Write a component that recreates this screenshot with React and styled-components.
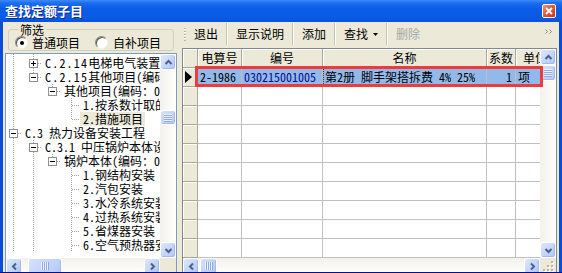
import React from 'react';
import styled, { createGlobalStyle } from 'styled-components';

const FONT = `"Noto Sans Mono CJK SC", "Noto Sans CJK SC", "Liberation Sans", sans-serif`;

const GlobalStyle = createGlobalStyle`
  * { box-sizing: border-box; }
  html, body { margin: 0; padding: 0; background: #ffffff; }
  body { font-family: ${FONT}; font-size: 12px; color: #000; }
`;

// window frame
const Window = styled.div`
  width: 562px;
  height: 273px;
  display: flex;
  flex-direction: column;
  background: #0B4CD9;
  border-bottom: 1px solid #00138C;
  overflow: hidden;
`;

const TitleBar = styled.div`
  height: 22px;
  flex: none;
  display: flex;
  align-items: center;
  justify-content: space-between;
  padding: 0 6px 0 5px;
  background: linear-gradient(to bottom, #3C8CF6 0%, #1C6DF0 14%, #0A5CE6 40%, #0A5AE4 80%, #0852DC 100%);
`;

const Title = styled.span`
  color: #fff;
  font-weight: bold;
  font-size: 13px;
  line-height: 22px;
  text-shadow: 1px 1px 0 #0A2A8A;
`;

const CloseButton = styled.div`
  width: 14px;
  height: 14px;
  border: 1px solid #fff;
  border-radius: 2px;
  background: linear-gradient(135deg, #F09477 0%, #E2552F 50%, #C8361A 100%);
  display: flex;
  align-items: center;
  justify-content: center;
`;

const Body = styled.div`
  flex: 1;
  margin: 0 3px 5px 3px;
  padding-bottom: 1px;
  background: #ECE9D8;
  display: flex;
`;

// left side: filter + tree
const LeftPanel = styled.div`
  width: 174px;
  flex: none;
  display: flex;
  flex-direction: column;
  padding-left: 2px;
`;

const GroupBox = styled.div`
  margin: 7px 3px 0 3px;
  padding-bottom: 1px;
  border: 1px solid #D0D0BF;
  border-radius: 3px;
`;

const Legend = styled.span`
  display: block;
  width: fit-content;
  margin: -7px 0 0 9px;
  padding: 0 2px;
  line-height: 13px;
  background: #ECE9D8;
`;

const RadioRow = styled.div`
  display: flex;
  align-items: center;
  height: 13px;
  padding-left: 6px;
`;

const RadioCircle = styled.span`
  width: 13px;
  height: 13px;
  flex: none;
  border-radius: 50%;
  border: 1px solid;
  border-color: #8A877A #F4F3EE #F4F3EE #8A877A;
  box-shadow: inset 1px 1px 0 #555;
  background: #fff;
  display: flex;
  align-items: center;
  justify-content: center;
  margin-right: ${p => p.$gap}px;
`;

const RadioDot = styled.span`
  width: 4px;
  height: 4px;
  border-radius: 50%;
  background: #000;
`;

const RadioLabel = styled.span`
  line-height: 13px;
  margin-right: ${p => p.$after || 0}px;
`;

const Tree = styled.div`
  flex: 1;
  margin-top: 2px;
  border: 1px solid #7F9DB9;
  background: #fff;
  display: grid;
  grid-template-columns: 1fr 16px;
  grid-template-rows: 1fr 16px;
  min-height: 0;
`;

const TreeViewport = styled.div`
  overflow: hidden;
  min-width: 0;
`;

const TreeRow = styled.div`
  display: flex;
  height: ${p => p.$h}px;
  overflow: hidden;
`;

const TreeLabel = styled.span`
  height: 14px;
  line-height: 14px;
  padding: 0 2px 0 3px;
  white-space: nowrap;
  background: ${p => (p.$selected ? '#ECE9D8' : 'transparent')};
`;

const Code = styled.span`
  letter-spacing: ${p => p.$spacing || 0}px;
`;

const Corner = styled.div`
  background: #ECE9D8;
`;

// right side: toolbar + grid
const RightPanel = styled.div`
  flex: 1;
  min-width: 0;
  display: flex;
  flex-direction: column;
  margin-left: 5px;
  padding-right: 2px;
`;

const Toolbar = styled.div`
  height: 22px;
  margin: 1px 0 3px 0;
  display: flex;
  align-items: center;
  padding-left: 2px;
`;

const Gripper = styled.div`
  width: 2px;
  height: 13px;
  margin-right: 2px;
  background: repeating-linear-gradient(to bottom, #B9B6A6 0 1px, #FFFFFF 1px 2px, transparent 2px 3px);
`;

const ToolButton = styled.div`
  display: flex;
  align-items: center;
  padding: 0 6px;
  line-height: 22px;
  color: ${p => (p.$disabled ? '#A7A6AA' : '#000')};
`;

const Separator = styled.div`
  width: 2px;
  height: 22px;
  margin: 0 2px;
  border-left: 1px solid #C5C2B2;
  border-right: 1px solid #FFFFFF;
`;

const Chevron = styled.div`
  margin-left: auto;
  margin-right: 4px;
  align-self: flex-start;
  margin-top: 6px;
  display: flex;
`;

const Grid = styled.div`
  flex: 1;
  position: relative;
  border: 1px solid #828790;
  background: #fff;
  display: grid;
  grid-template-columns: 1fr 16px;
  grid-template-rows: 1fr 16px;
  min-height: 0;
`;

const GridCells = styled.div`
  overflow: hidden;
  min-width: 0;
  background: #fff;
`;

const COLS = '15px 44px 81px 164px 29px 39px';

const GridRow = styled.div`
  display: grid;
  grid-template-columns: ${COLS};
  height: 19px;
`;

const HeadCell = styled.div`
  background: #ECE9D8;
  border-right: 1px solid #ACA899;
  border-bottom: 1px solid #ACA899;
  box-shadow: inset 1px 1px 0 #FFFFFF;
  line-height: 18px;
  text-align: center;
  white-space: nowrap;
  overflow: hidden;
`;

const IndCell = styled(HeadCell)`
  display: flex;
  align-items: center;
  padding-left: 2px;
`;

const Cell = styled.div`
  position: relative;
  background: ${p => (p.$selected ? '#93B8EA' : '#FFFFFF')};
  color: ${p => p.$color || '#000'};
  text-align: ${p => p.$align || 'left'};
  border-right: 1px solid #C0C0C0;
  border-bottom: 1px solid #C0C0C0;
  padding: 0 3px 0 2px;
  line-height: 18px;
  white-space: nowrap;
  overflow: hidden;
`;

const FocusMark = styled.span`
  position: absolute;
  left: 0;
  top: 0;
  bottom: 0;
  border-left: 1px dotted #3A3A20;
`;

const Highlight = styled.div`
  position: absolute;
  left: 12px;
  top: 17px;
  width: 348px;
  height: 21px;
  border: 3px solid #EE3B3B;
  pointer-events: none;
`;

// scroll bars
const ScrollTrack = styled.div`
  display: flex;
  flex-direction: ${p => (p.$vertical ? 'column' : 'row')};
  background: ${p =>
    p.$vertical
      ? 'linear-gradient(to right, #F3F1EC, #FEFEFB)'
      : 'linear-gradient(to bottom, #F3F1EC, #FEFEFB)'};
  overflow: hidden;
  min-width: 0;
  min-height: 0;
`;

const ScrollButton = styled.div`
  width: 16px;
  height: 16px;
  flex: none;
  display: flex;
  align-items: center;
  justify-content: center;
  border: 1px solid #FFFFFF;
  border-radius: 3px;
  background: linear-gradient(135deg, #DDE7FE 0%, #C4D5FB 55%, #B0C6F6 100%);
  box-shadow: inset -1px -1px 0 #A3B9EA;
`;

const Thumb = styled.div`
  flex: none;
  width: ${p => (p.$vertical ? 16 : p.$size)}px;
  height: ${p => (p.$vertical ? p.$size : 16)}px;
  margin-top: ${p => (p.$vertical ? p.$offset : 0)}px;
  margin-left: ${p => (p.$vertical ? 0 : p.$offset)}px;
  display: flex;
  align-items: center;
  justify-content: center;
  border: 1px solid #FFFFFF;
  border-radius: 3px;
  background: linear-gradient(135deg, #D5E1FD 0%, #C3D4FB 55%, #B4C9F7 100%);
  box-shadow: inset -1px -1px 0 #A3B9EA;
`;

const Filler = styled.div`
  flex: 1;
`;

const SizeGrip = styled.div`
  background: #ECE9D8;
  display: flex;
  align-items: flex-end;
  justify-content: flex-end;
  padding: 0 2px 2px 0;
`;

const ARROWS = {
  up: '1.5,6 4.5,3 7.5,6',
  down: '1.5,3 4.5,6 7.5,3',
  left: '6,1.5 3,4.5 6,7.5',
  right: '3,1.5 6,4.5 3,7.5',
};

const Arrow = ({ dir }) => (
  <svg width="9" height="9" viewBox="0 0 9 9">
    <polyline points={ARROWS[dir]} fill="none" stroke="#4D6185" strokeWidth="2" />
  </svg>
);

const Grip = ({ vertical }) => (
  <svg width="8" height="8" viewBox="0 0 8 8">
    {[0, 2, 4, 6].map(i =>
      vertical ? (
        <g key={i}>
          <rect x="0" y={i} width="8" height="1" fill="#EEF4FE" />
          <rect x="0" y={i + 1} width="8" height="1" fill="#8DA8E3" />
        </g>
      ) : (
        <g key={i}>
          <rect x={i} y="0" width="1" height="8" fill="#EEF4FE" />
          <rect x={i + 1} y="0" width="1" height="8" fill="#8DA8E3" />
        </g>
      )
    )}
  </svg>
);

function ScrollBar({ vertical, offset, size }) {
  return (
    <ScrollTrack $vertical={vertical}>
      <ScrollButton>
        <Arrow dir={vertical ? 'up' : 'left'} />
      </ScrollButton>
      <Thumb $vertical={vertical} $offset={offset} $size={size}>
        <Grip vertical={vertical} />
      </Thumb>
      <Filler />
      <ScrollButton>
        <Arrow dir={vertical ? 'down' : 'right'} />
      </ScrollButton>
    </ScrollTrack>
  );
}

// tree connectors
const CENTERS = [7, 27, 46, 65];
const LINE = { stroke: '#A0A0A0', strokeDasharray: '1 1', strokeWidth: 1 };

function TreeLines({ node, h }) {
  const own = node.level;
  const width = own == null ? 80 : CENTERS[own] + 9;
  const c = own == null ? 0 : CENTERS[own];
  return (
    <svg width={width} height={h} style={{ flex: 'none' }}>
      {node.guides.map(g => (
        <line key={g} x1={CENTERS[g] + 0.5} y1="0" x2={CENTERS[g] + 0.5} y2={h} {...LINE} />
      ))}
      {own != null && (
        <>
          <line x1={c + 0.5} y1="0" x2={c + 0.5} y2={node.last ? 7.5 : h} {...LINE} />
          <line x1={node.box ? c + 5 : c + 1} y1="7.5" x2={c + 9} y2="7.5" {...LINE} />
          {node.box && (
            <>
              <rect x={c - 3.5} y="3.5" width="8" height="8" fill="#fff" stroke="#8E8F8F" />
              <line x1={c - 2} y1="7.5" x2={c + 3} y2="7.5" stroke="#000" />
              {node.box === '+' && <line x1={c + 0.5} y1="5" x2={c + 0.5} y2="10" stroke="#000" />}
            </>
          )}
        </>
      )}
    </svg>
  );
}

const treeNodes = [
  { h: 2, guides: [0, 1], level: null },
  { guides: [0], level: 1, box: '+', code: 'C.2.14', spacing: 1.2, text: '电梯电气装置(编码：030214)' },
  { guides: [0], level: 1, box: '-', last: true, code: 'C.2.15', spacing: 1.2, text: '其他项目(编码：030215)' },
  { guides: [0], level: 2, box: '-', last: true, text: '其他项目(编码：030215001)' },
  { guides: [0], level: 3, text: '1.按系数计取的项目' },
  { guides: [0], level: 3, last: true, selected: true, text: '2.措施项目' },
  { guides: [], level: 0, box: '-', text: 'C.3 热力设备安装工程' },
  { guides: [0], level: 1, box: '-', text: 'C.3.1  中压锅炉本体设备安装' },
  { guides: [0, 1], level: 2, box: '-', last: true, text: '锅炉本体(编码：030301)' },
  { guides: [0, 1], level: 3, text: '1.钢结构安装' },
  { guides: [0, 1], level: 3, text: '2.汽包安装' },
  { guides: [0, 1], level: 3, text: '3.水冷系统安装' },
  { guides: [0, 1], level: 3, text: '4.过热系统安装' },
  { guides: [0, 1], level: 3, text: '5.省煤器安装' },
  { guides: [0, 1], level: 3, text: '6.空气预热器安装' },
];

const headers = ['电算号', '编号', '名称', '系数', '单位'];
const EMPTY_ROWS = 9;

export default function App() {
  return (
    <>
      <GlobalStyle />
      <Window>
        <TitleBar>
          <Title>查找定额子目</Title>
          <CloseButton>
            <svg width="8" height="8" viewBox="0 0 8 8">
              <path d="M1 1 L7 7 M7 1 L1 7" stroke="#fff" strokeWidth="2" />
            </svg>
          </CloseButton>
        </TitleBar>
        <Body>
          <LeftPanel>
            <GroupBox>
              <Legend>筛选</Legend>
              <RadioRow>
                <RadioCircle $gap={4}>
                  <RadioDot />
                </RadioCircle>
                <RadioLabel $after={15}>普通项目</RadioLabel>
                <RadioCircle $gap={5} />
                <RadioLabel>自补项目</RadioLabel>
              </RadioRow>
            </GroupBox>
            <Tree>
              <TreeViewport>
                {treeNodes.map((n, i) => {
                  const h = n.h || 14;
                  return (
                    <TreeRow key={i} $h={h}>
                      <TreeLines node={n} h={h} />
                      {n.level != null && (
                        <TreeLabel $selected={n.selected}>
                          {n.code && <Code $spacing={n.spacing}>{n.code}</Code>}
                          {n.text}
                        </TreeLabel>
                      )}
                    </TreeRow>
                  );
                })}
              </TreeViewport>
              <ScrollBar vertical offset={40} size={15} />
              <ScrollBar offset={6} size={34} />
              <Corner />
            </Tree>
          </LeftPanel>

          <RightPanel>
            <Toolbar>
              <Gripper />
              <ToolButton>退出</ToolButton>
              <Separator />
              <ToolButton>显示说明</ToolButton>
              <Separator />
              <ToolButton>添加</ToolButton>
              <Separator />
              <ToolButton>
                查找
                <svg width="5" height="3" viewBox="0 0 5 3" style={{ marginLeft: 5 }}>
                  <path d="M0 0 H5 L2.5 3 Z" fill="#000" />
                </svg>
              </ToolButton>
              <Separator />
              <ToolButton $disabled>删除</ToolButton>
              <Chevron>
                <svg width="8" height="5" viewBox="0 0 8 5">
                  <path d="M0.5 0.5 L2.5 2.5 L0.5 4.5 M4.5 0.5 L6.5 2.5 L4.5 4.5" fill="none" stroke="#8C8A80" />
                </svg>
              </Chevron>
            </Toolbar>

            <Grid>
              <GridCells>
                <GridRow>
                  <HeadCell />
                  {headers.map(h => (
                    <HeadCell key={h}>{h}</HeadCell>
                  ))}
                </GridRow>
                <GridRow>
                  <IndCell>
                    <svg width="8" height="12" viewBox="0 0 8 12">
                      <path d="M0 0 L7 6 L0 12 Z" fill="#000" />
                    </svg>
                  </IndCell>
                  <Cell $selected>2-1986</Cell>
                  <Cell $selected $color="#0A0A8C">030215001005</Cell>
                  <Cell $selected>
                    <FocusMark />
                    第2册 脚手架搭拆费 4% 25%
                  </Cell>
                  <Cell $selected $align="right">1</Cell>
                  <Cell $selected>项</Cell>
                </GridRow>
                {Array.from({ length: EMPTY_ROWS }).map((_, i) => (
                  <GridRow key={i}>
                    <IndCell />
                    <Cell />
                    <Cell />
                    <Cell />
                    <Cell />
                    <Cell />
                  </GridRow>
                ))}
              </GridCells>
              <ScrollBar vertical offset={0} size={16} />
              <ScrollBar offset={1} size={17} />
              <SizeGrip>
                <svg width="11" height="11" viewBox="0 0 11 11">
                  {[[8, 0], [8, 4], [4, 4], [8, 8], [4, 8], [0, 8]].map(([x, y]) => (
                    <g key={`${x}-${y}`}>
                      <rect x={x + 1} y={y + 1} width="2" height="2" fill="#FFFFFF" />
                      <rect x={x} y={y} width="2" height="2" fill="#B8B4A2" />
                    </g>
                  ))}
                </svg>
              </SizeGrip>
              <Highlight />
            </Grid>
          </RightPanel>
        </Body>
      </Window>
    </>
  );
}
